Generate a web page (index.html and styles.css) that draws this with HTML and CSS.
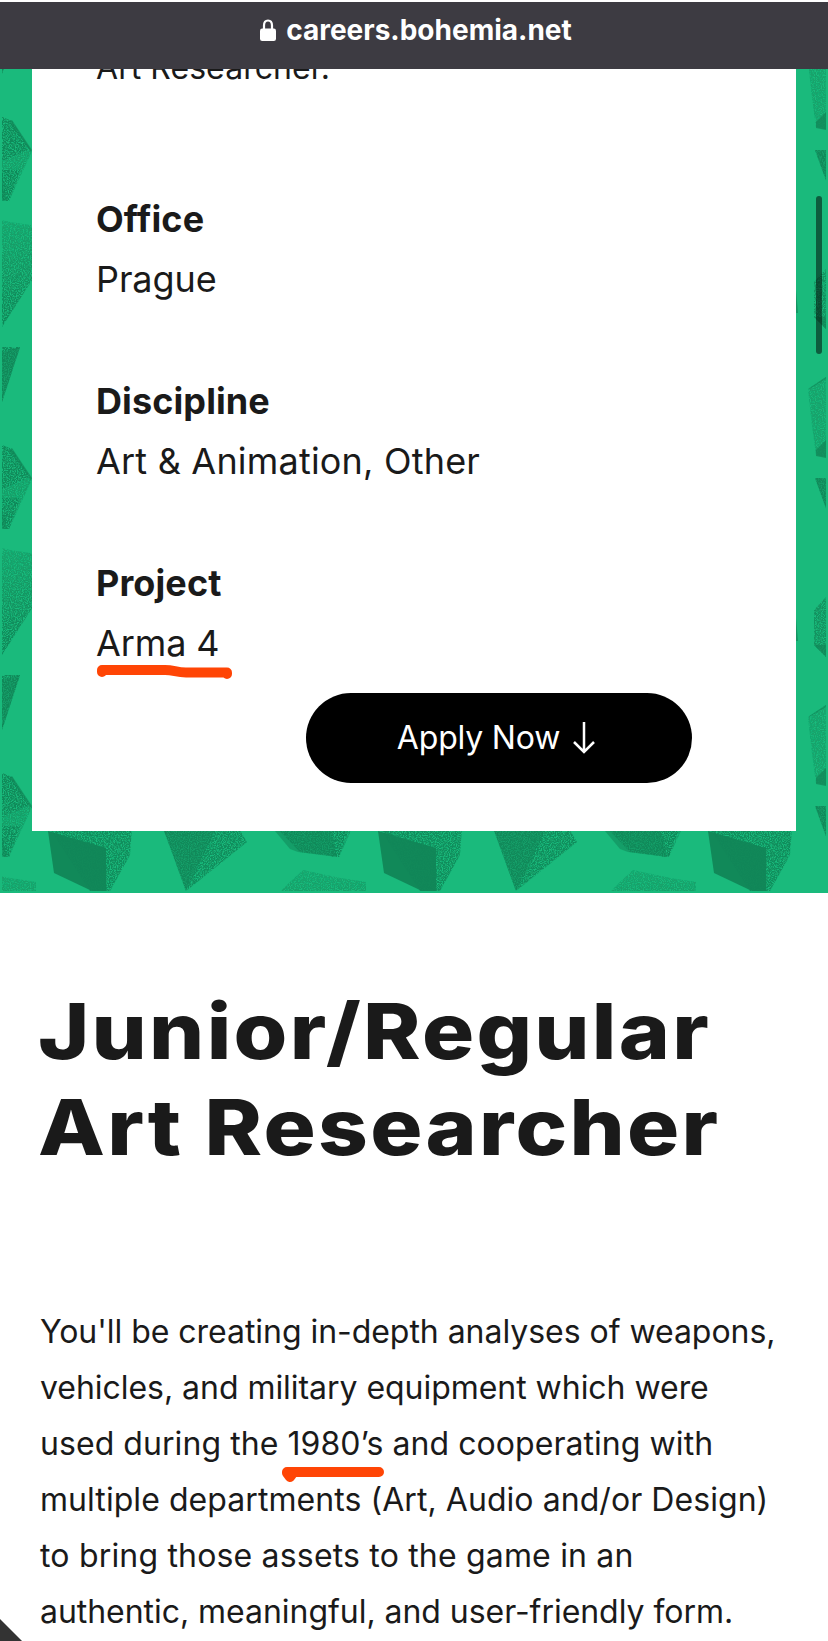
FILE: index.html
```html
<!DOCTYPE html>
<html lang="en">

<head>
    <meta charset="UTF-8">
    <title>Junior/Regular Art Researcher</title>
    <link rel="stylesheet" href="styles.css">
</head>

<body>
    <div class="address-bar">
        <svg class="lock" viewBox="0 0 16 22" width="16" height="22">
            <path d="M4 11V6.500C4 3.500 5.500 1.500 8 1.500s4 2 4 5V11" fill="none" stroke="#fff" stroke-width="2.200" />
            <rect x="0" y="9.500" width="16" height="12.500" rx="2.200" fill="#fff" />
        </svg>
        <span class="address">careers.bohemia.net</span>
    </div>

    <div class="hero">
        <!-- background with scattered stones -->
        <svg class="hero-bg" viewBox="0 0 828 893" width="828" height="893">
            <defs>
                <filter id="grain" x="0" y="0" width="828" height="893" filterUnits="userSpaceOnUse">
                    <feTurbulence type="fractalNoise" baseFrequency="0.85" numOctaves="2" seed="4" />
                    <feColorMatrix values="0 0 0 0 0  0 0 0 0 0  0 0 0 0 0  4 0 0 0 -1.300" result="n" />
                    <feComposite in="SourceGraphic" in2="n" operator="in" />
                </filter>
                <clipPath id="area">
                    <rect x="2" y="0" width="824" height="891" />
                </clipPath>
                <linearGradient id="fade" x1="0" y1="0" x2="0" y2="1">
                    <stop offset="0" stop-color="#118657" stop-opacity=".4" />
                    <stop offset="1" stop-color="#118657" stop-opacity="1" />
                </linearGradient>
                <g id="light">
                    <path d="M330 17l10 4 20 30-12 26-11 24-7 0z" opacity=".55" />
                    <path d="M330 17l10 4 18 28-28 12z" opacity=".8" />
                    <path d="M279 135l9-9 13-12 37 8 26 4v48l-34 53-40-50z" fill="url(#fade)" />
                    <path d="M46 70h84l-2 29-20 36h-20z" opacity=".85" />
                    <path d="M153 50h70l22 36-61 49z" opacity=".85" />
                    <path d="M300 247h48l-18 55z" opacity=".9" />
                    <path d="M146 289l18-12v80l-10-2-4-30z" opacity=".45" />
                    <path d="M152 182l12-13 30 0v60h-30l-12-12z" opacity=".75" />
                    <path d="M273 70h75l-11 31-39-5z" opacity=".85" />
                </g>
                <g id="dark">
                    <path d="M46 75l58 17v43H90l-38-18z" opacity=".95" />
                    <path d="M153 50h72l-41 85z" opacity=".5" />
                    <path d="M273 75h56l6 26-39-5-8-3z" opacity=".55" />
                    <path d="M328 252l20-5-18 55-6-20z" opacity=".5" />
                    <path d="M154 350l10-10v18l-10-2z" opacity=".75" />
                    <path d="M152 217l12 12v-12z" opacity=".7" />
                    <path d="M134 190l2 23h-2z" opacity=".7" />
                    <path d="M340 20l20 30-1 2-22-30z" opacity=".6" />
                    <path d="M146 289l18-12v2l-15 9z" opacity=".6" />
                </g>
                <g id="light-row">
                    <use href="#light" x="-328" />
                    <use href="#light" x="2" />
                    <use href="#light" x="332" />
                    <use href="#light" x="662" />
                </g>
                <g id="dark-row">
                    <use href="#dark" x="-328" />
                    <use href="#dark" x="2" />
                    <use href="#dark" x="332" />
                    <use href="#dark" x="662" />
                </g>
            </defs>
            <g clip-path="url(#area)" fill="#118657">
                <g filter="url(#grain)">
                    <use href="#light-row" y="-228" />
                    <use href="#light-row" y="100" />
                    <use href="#light-row" y="428" />
                    <use href="#light-row" y="756" />
                </g>
                <use href="#dark-row" y="-228" />
                <use href="#dark-row" y="100" />
                <use href="#dark-row" y="428" />
                <use href="#dark-row" y="756" />
            </g>
        </svg>

        <div class="card">
            <p class="intro">Art Researcher.</p>
            <dl class="facts">
                <div class="fact">
                    <dt>Office</dt>
                    <dd class="short">Prague</dd>
                </div>
                <div class="fact">
                    <dt>Discipline</dt>
                    <dd>Art &amp; Animation, Other</dd>
                </div>
                <div class="fact">
                    <dt>Project</dt>
                    <dd class="short"><span class="marked">Arma 4
                        <svg class="mark mark-project" viewBox="0 0 138 16" width="138" height="16">
                            <path d="M6 6H69C78 6 80 8.500 90 8.500H131M6 7v1M131 9v1" />
                        </svg></span></dd>
                </div>
            </dl>
            <a class="apply" href="#">Apply Now
                <svg class="arrow" viewBox="0 0 22 32" width="22" height="32">
                    <path d="M11 0v30M1 20l10 10 10-10" fill="none" stroke="#fff" stroke-width="2.500" />
                </svg>
            </a>
        </div>
    </div>

    <div class="article">
        <h1><span class="title-line">Junior/Regular</span><br><span class="title-line">Art Researcher</span></h1>
        <p class="text">
            You'll be creating in-depth analyses of weapons,<br>
            vehicles, and military equipment which were<br>
            <span class="loose">used during the <span class="marked">1980’s<svg class="mark mark-year" viewBox="0 0 104 18" width="104" height="18">
                    <path d="M6 6H98M6 7l3 4 3-4" />
                </svg></span> and cooperating with</span><br>
            <span class="loose">multiple departments (Art, Audio and/or Design)</span><br>
            <span class="looser">to bring those assets to the game in an</span><br>
            authentic, meaningful, and user-friendly form.
        </p>
    </div>

    <div class="scrollbar"></div>
    <div class="corner"></div>
</body>

</html>
```
FILE: styles.css
```css
html,
body,
h1,
p,
dl,
dt,
dd {
    padding: 0px;
    margin: 0px;
}

body {
    position: relative;
    width: 828px;
    height: 1641px;
    overflow: hidden;
    background: #ffffff;
    color: #1a1a1a;
    font-family: Inter, "Liberation Sans", sans-serif;
}

.address-bar {
    position: absolute;
    top: 0px;
    left: 0px;
    z-index: 10;
    box-sizing: border-box;
    width: 100%;
    height: 69px;
    padding: 0px 0px 11px 4px;
    border-top: #ffffff solid 2px;
    background: #3d3b42;
    color: #ffffff;
    display: flex;
    align-items: center;
    justify-content: center;
    gap: 10px;
}

.address {
    font-size: 28px;
    font-weight: 700;
    line-height: 40px;
}

.hero {
    position: relative;
    height: 893px;
    background: #1aba7c;
}

.hero-bg {
    position: absolute;
    top: 0px;
    left: 0px;
}

.card {
    position: relative;
    box-sizing: border-box;
    height: 831px;
    margin: 0px 32px;
    padding: 38px 104px 48px 64px;
    background: #ffffff;
    font-size: 36px;
    line-height: 60px;
    letter-spacing: 0.2px;
    display: flex;
    flex-direction: column;
}

.intro {
    font-size: 32px;
    letter-spacing: 0.05px;
    margin-bottom: 91px;
}

.fact {
    margin-bottom: 62px;
}

.fact:last-child {
    margin-bottom: 20px;
}

.fact dt {
    font-weight: 700;
    letter-spacing: 0.1px;
}

.fact .short {
    letter-spacing: -0.1px;
}

.apply {
    box-sizing: border-box;
    width: 386px;
    height: 90px;
    padding-right: 6px;
    border-radius: 45px;
    background: #000000;
    color: #ffffff;
    font-size: 32px;
    letter-spacing: -0.2px;
    text-decoration: none;
    align-self: flex-end;
    display: flex;
    align-items: center;
    justify-content: center;
    gap: 13px;
}

.marked {
    position: relative;
    white-space: nowrap;
}

.mark {
    position: absolute;
    fill: none;
    stroke: #ff4505;
    stroke-width: 10px;
    stroke-linecap: round;
    stroke-linejoin: round;
}

.mark-project {
    left: 0px;
    top: 43px;
}

.mark-year {
    left: -6px;
    top: 42px;
}

.article {
    padding: 90px 40px 0px 40px;
    white-space: nowrap;
}

h1 {
    font-size: 77px;
    font-weight: 800;
    line-height: 96px;
    letter-spacing: 2px;
    margin-bottom: 129px;
}

/* wide letterforms */
.title-line {
    display: inline-block;
    transform: scaleX(1.13);
    transform-origin: 0 0;
    margin-left: -2px;
}

.text {
    font-size: 32px;
    line-height: 56px;
    letter-spacing: -0.04px;
}

.loose {
    letter-spacing: 0.06px;
}

.looser {
    letter-spacing: 0.18px;
}

.scrollbar {
    position: absolute;
    top: 196px;
    left: 816px;
    width: 6px;
    height: 158px;
    border-radius: 3px;
    background: rgba(0, 0, 0, 0.5);
}

.corner {
    position: absolute;
    left: 0px;
    bottom: 0px;
    width: 22px;
    height: 22px;
    background: #333333;
    clip-path: polygon(0 0, 100% 100%, 0 100%);
}
```
